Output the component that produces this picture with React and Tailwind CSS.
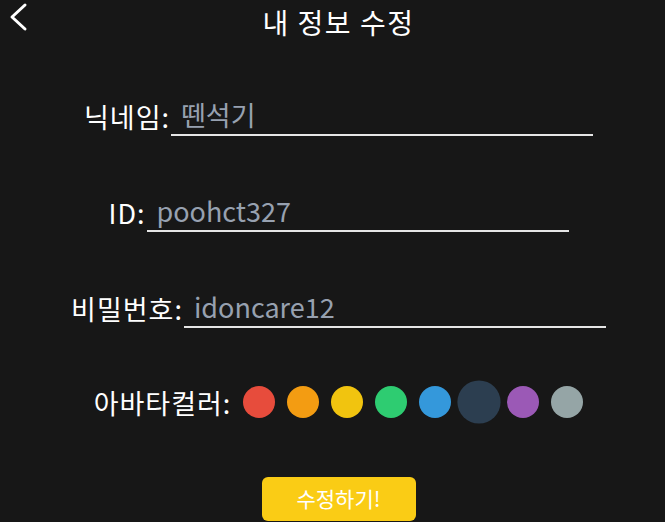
import { useState } from "react"

const COLORS = ["#e74c3c", "#f39c12", "#f1c40f", "#2ecc71", "#3498db", "#2c3e50", "#9b59b6", "#95a5a6"]

const Field = ({ label, value, className = "" }) => (
  <div className={`flex items-center justify-center h-10 ${className}`}>
    <span className="text-[27px] leading-none tracking-[1px] mr-[1px]">{label}</span>
    <input
      defaultValue={value}
      className="w-[422px] h-10 bg-transparent border-b-2 border-[#e5e5e5] pl-[10px] text-[27px] text-[#97a1b0] outline-none"
    />
  </div>
)

export default function App() {
  const [selected, setSelected] = useState(5)

  return (
    <div
      className="relative w-full min-h-[522px] bg-[#171717] text-white overflow-hidden"
      style={{ fontFamily: '"Noto Sans CJK KR", "Noto Sans", sans-serif' }}
    >
      {/* back */}
      <button className="absolute left-[6px] top-[2px] w-[28px] h-[32px] flex items-center justify-center">
        <svg width="28" height="32" viewBox="0 0 28 32" fill="none">
          <polyline points="19,3 6,15 19,27" stroke="white" strokeWidth="3" strokeLinecap="round" strokeLinejoin="round" />
        </svg>
      </button>

      <div className="pl-3 flex flex-col">
        <div className="h-[44px] flex items-center justify-center">
          <h1 className="text-[28px] leading-none tracking-[1.5px]">내 정보 수정</h1>
        </div>

        <Field label="닉네임:" value="뗀석기" className="mt-[52px]" />
        <Field label="ID:" value="poohct327" className="mt-[56px]" />
        <Field label="비밀번호:" value="idoncare12" className="mt-[56px]" />

        <div className="mt-[52px] h-[44px] flex items-center justify-center">
          <span className="text-[27px] leading-none tracking-[1px] mr-[12px]">아바타컬러:</span>
          <div className="flex gap-3">
            {COLORS.map((c, i) => (
              <button
                key={c}
                onClick={() => setSelected(i)}
                className={`w-8 h-8 rounded-full ${i === selected ? "scale-[1.35]" : ""}`}
                style={{ backgroundColor: c }}
              />
            ))}
          </div>
        </div>

        <div className="mt-[53px] flex justify-center">
          <button className="w-[154px] h-[44px] rounded-md bg-[#facc15] text-white text-[21px]">
            수정하기!
          </button>
        </div>
      </div>
    </div>
  )
}
